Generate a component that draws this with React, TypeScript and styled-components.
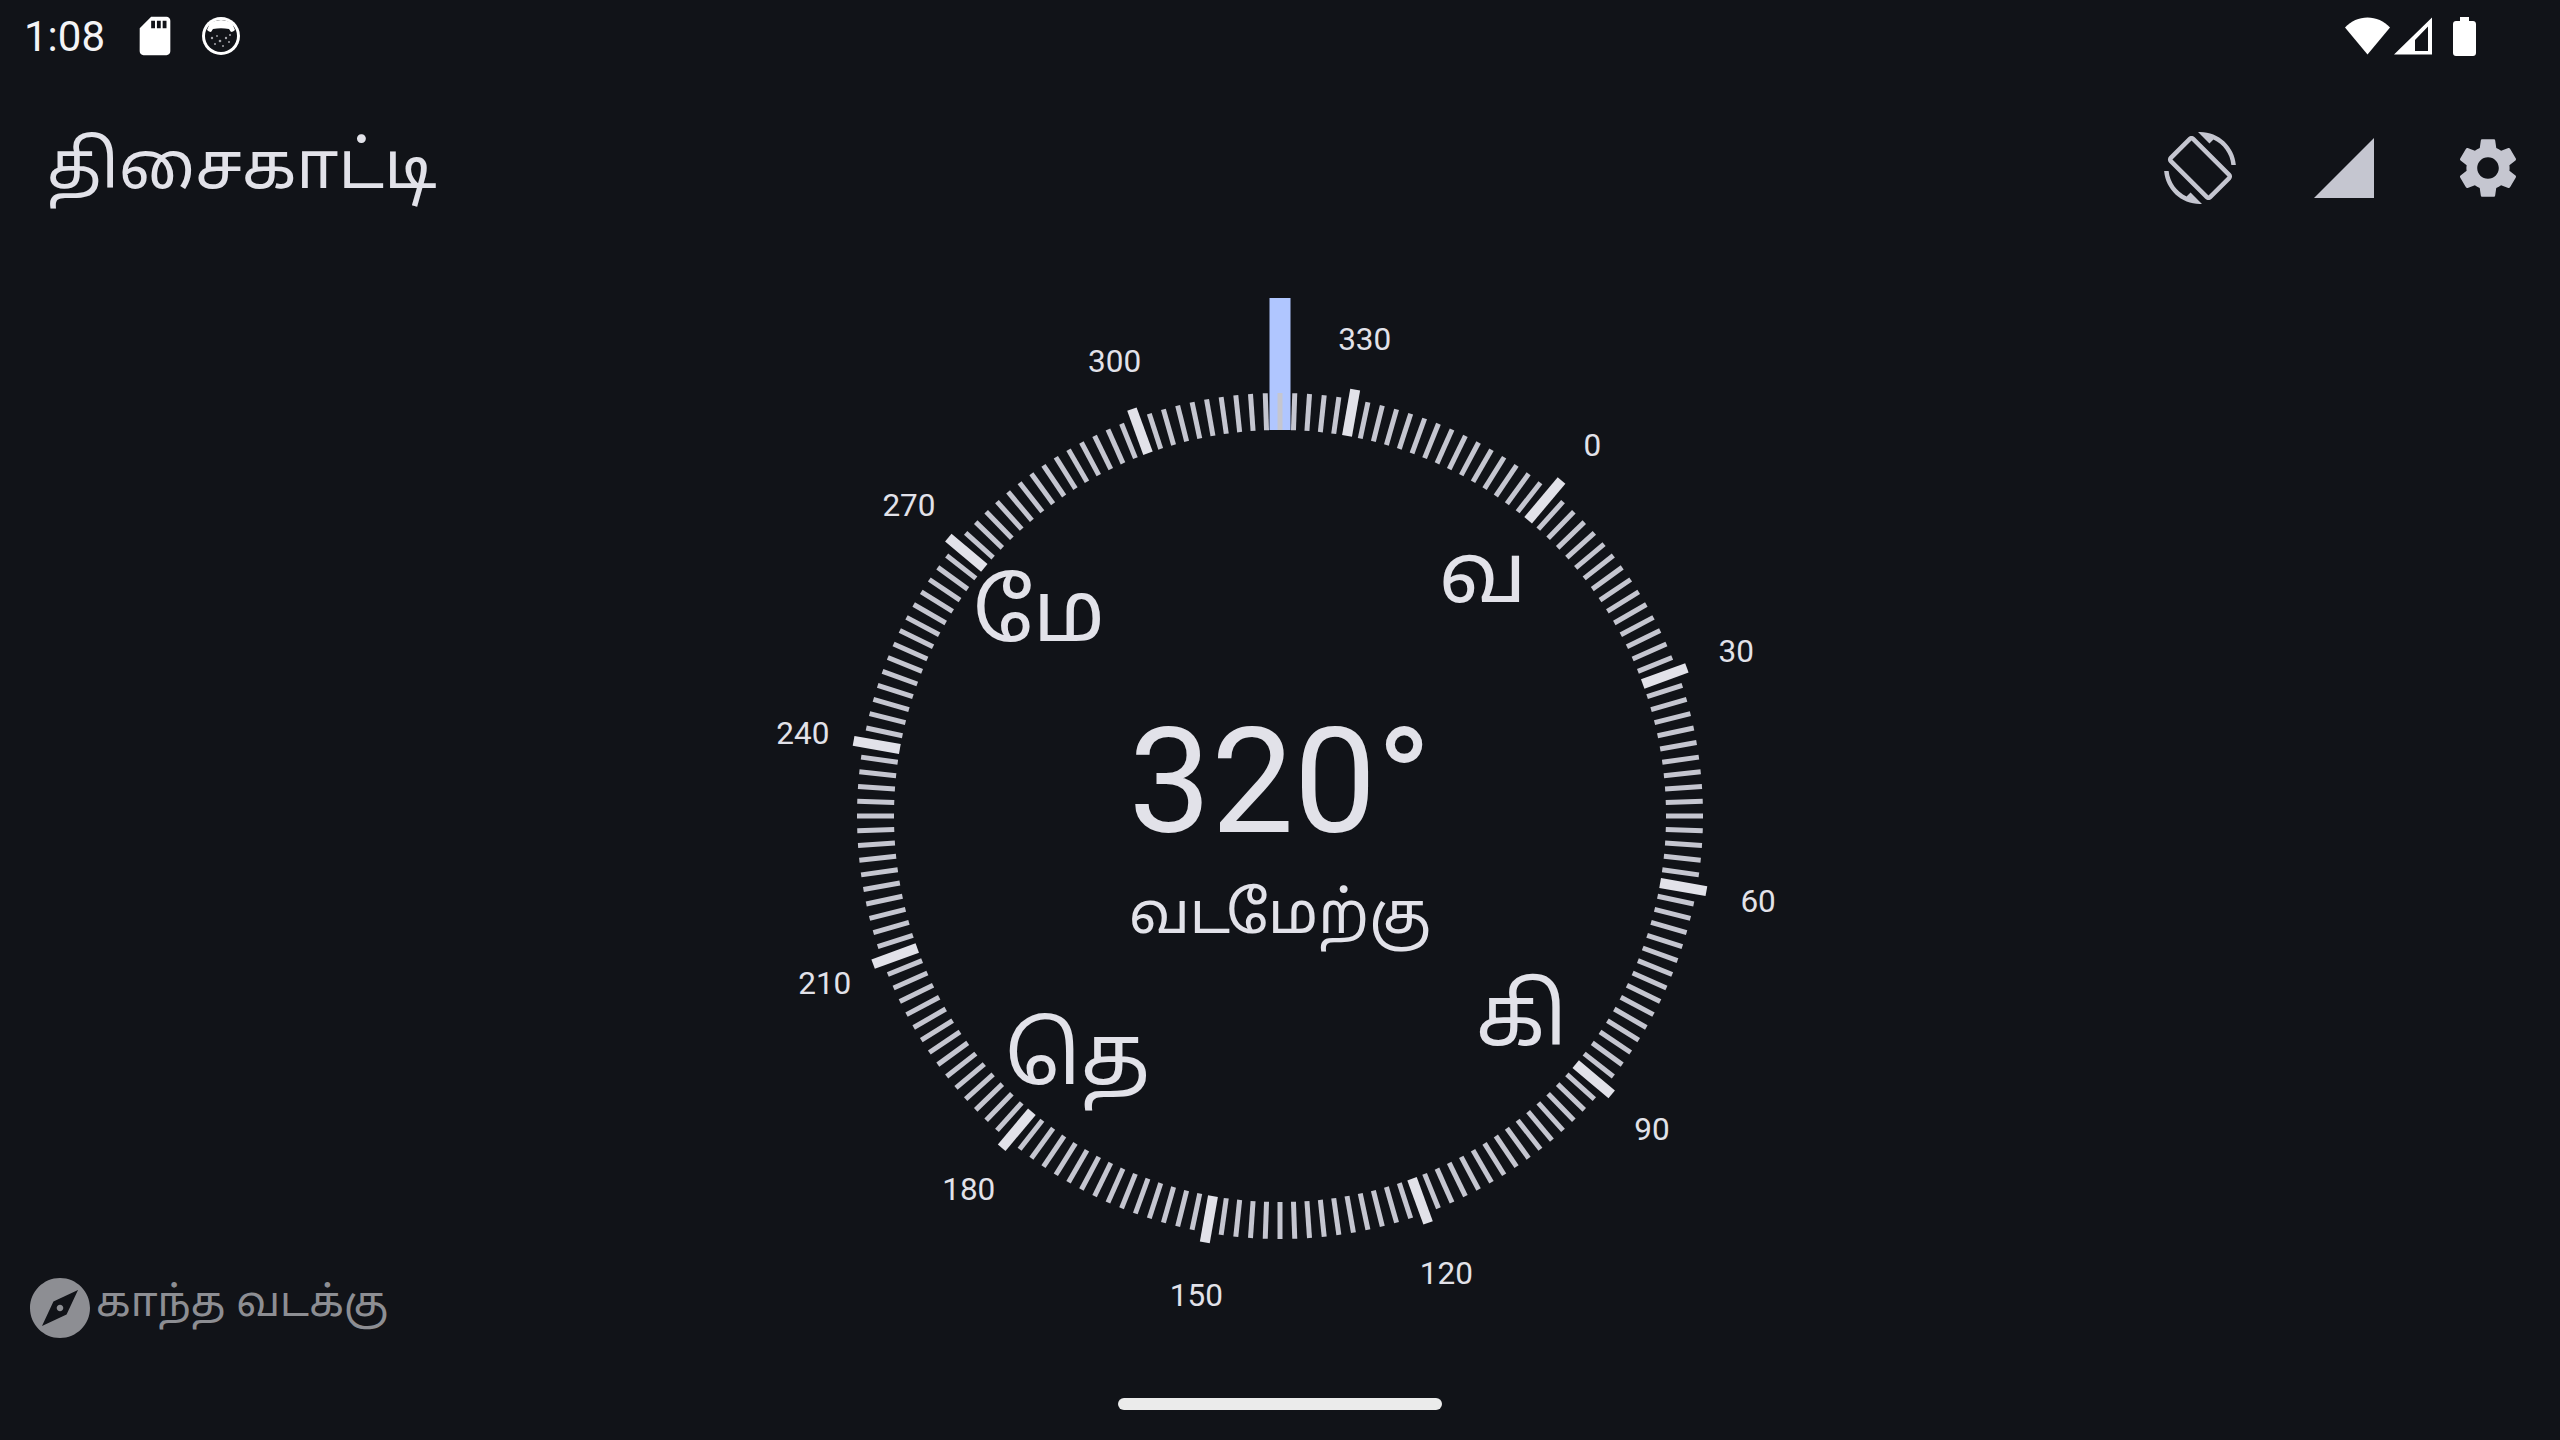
import React from 'react';
import styled, {createGlobalStyle} from 'styled-components';

const HEADING = 320;
const TAMIL_FONT = '"Noto Sans Tamil", "Noto Sans", sans-serif';

const GlobalStyle = createGlobalStyle`
  html, body {
    margin: 0;
    padding: 0;
    background: #111318;
  }
  #root {
    height: 1440px;
  }
`;

const Page = styled.div`
  display: flex;
  flex-direction: column;
  width: 2560px;
  height: 1440px;
  overflow: hidden;
  background: #111318;
  color: #e2e2e9;
  font-family: Roboto, sans-serif;
`;

const StatusBar = styled.header`
  display: flex;
  align-items: center;
  justify-content: space-between;
  flex: none;
  height: 72px;
  padding: 0 84px 0 24px;
`;

const StatusGroup = styled.div`
  display: flex;
  align-items: center;
`;

const Time = styled.span`
  width: 108px;
  font-size: 42px;
  color: #f4f4f6;
`;

const StatusIcon = styled.svg<{$gap?: number}>`
  display: block;
  flex: none;
  margin-left: ${p => p.$gap ?? 0}px;
  fill: #ffffff;
`;

const Toolbar = styled.div`
  display: flex;
  align-items: center;
  justify-content: space-between;
  flex: none;
  height: 192px;
  padding: 0 36px 0 47px;
`;

const Title = styled.h1`
  margin: 6px 0 0;
  font-family: ${TAMIL_FONT};
  font-size: 66px;
  font-weight: 400;
  color: #e2e2e9;
`;

const Actions = styled.div`
  display: flex;
  gap: 72px;
`;

const ActionIcon = styled.svg`
  display: block;
  width: 72px;
  height: 72px;
  fill: #c5c6d0;
`;

const Main = styled.main`
  position: relative;
  display: flex;
  align-items: center;
  justify-content: center;
  flex: 1;
  min-height: 0;
`;

const Dial = styled.div`
  position: relative;
  width: 1200px;
  height: 1104px;
`;

const DialFace = styled.svg`
  display: block;
`;

const Tick = styled.line<{$major?: boolean}>`
  stroke: ${p => (p.$major ? '#e2e2e9' : '#c5c6d0')};
  stroke-width: ${p => (p.$major ? 10 : 5)};
`;

const Pointer = styled.rect`
  fill: #b0c6ff;
`;

const DegreeLabel = styled.text`
  fill: #e2e2e9;
  font-size: 31.500px;
  text-anchor: middle;
  dominant-baseline: central;
`;

const CardinalLabel = styled.text`
  fill: #e2e2e9;
  font-family: ${TAMIL_FONT};
  font-size: 84px;
  text-anchor: middle;
  dominant-baseline: central;
`;

const Reading = styled.div`
  position: absolute;
  inset: 0;
  display: flex;
  flex-direction: column;
  align-items: center;
  justify-content: center;
`;

const Degrees = styled.div`
  margin-top: 28px;
  font-size: 147px;
  line-height: 176px;
  color: #e2e2e9;
`;

const Direction = styled.div`
  margin-top: 2px;
  font-family: ${TAMIL_FONT};
  font-size: 58.500px;
  line-height: 94px;
  color: #e2e2e9;
`;

const NorthHint = styled.div`
  position: absolute;
  left: 24px;
  bottom: 24px;
  display: flex;
  align-items: center;
  font-family: ${TAMIL_FONT};
  font-size: 42px;
  color: #8d8e93;
`;

const HintText = styled.span`
  margin-bottom: 6px;
`;

const HintIcon = styled.svg`
  display: block;
  width: 72px;
  height: 72px;
  fill: #8d8e93;
`;

const NavBar = styled.div`
  display: flex;
  align-items: center;
  justify-content: center;
  flex: none;
  height: 72px;
`;

const NavHandle = styled.div`
  width: 324px;
  height: 12px;
  border-radius: 6px;
  background: #ebebeb;
`;

const polar = (angle: number, radius: number) => {
    const rad = (angle * Math.PI) / 180;
    return {x: radius * Math.sin(rad), y: -radius * Math.cos(rad)};
};

const cardinals = [
    {text: 'வ', angle: 40},
    {text: 'கி', angle: 130},
    {text: 'தெ', angle: 220},
    {text: 'மே', angle: 310},
];

const degreesList = Array.from({length: 180}, (_, i) => i * 2);

// the north mark sticks out a little further than the other 30 degree marks
const tickEnd = (deg: number) => {
    if (deg === 0) return -438;
    return deg % 30 === 0 ? -433 : -423;
};

function CatFace() {
    return (
        <StatusIcon $gap={24} width="38" height="38" viewBox="0 0 38 38">
            <circle cx="19" cy="19" r="19" />
            <circle cx="19" cy="19" r="16" fill="#111318" />
            <path d="M8 6Q19 0 30 6L33 13Q31 15 29 15L27 12Q19 10.500 11 12L9 15Q7 15 5 13Z" />
            <g fill="#a4a5aa">
                <circle cx="10" cy="21" r="1.200" />
                <circle cx="15" cy="19" r="0.900" />
                <circle cx="18" cy="24" r="1.300" />
                <circle cx="24" cy="21" r="1.200" />
                <circle cx="28" cy="18" r="1" />
                <circle cx="13" cy="27" r="1" />
                <circle cx="21" cy="29" r="1" />
                <circle cx="27" cy="25" r="1" />
            </g>
        </StatusIcon>
    );
}

export default function App() {
    return (
        <Page>
            <GlobalStyle />
            <StatusBar>
                <StatusGroup>
                    <Time>1:08</Time>
                    <StatusIcon width="46" height="46" viewBox="0 0 24 24">
                        <path d="M18 2h-8L4.020 8 4 20c0 1.100.9 2 2 2h12c1.100 0 2-.9 2-2V4c0-1.100-.9-2-2-2zm-6 6h-2V4h2v4zm3 0h-2V4h2v4zm3 0h-2V4h2v4z" />
                    </StatusIcon>
                    <CatFace />
                </StatusGroup>
                <StatusGroup>
                    <StatusIcon width="45" height="38" viewBox="0 0 45 38">
                        <path d="M22.500 37.500 0 10.600C6 4 14 .5 22.500.5S39 4 45 10.600z" />
                    </StatusIcon>
                    <StatusIcon $gap={4} width="38" height="38" viewBox="0 0 38 38">
                        <path
                            fillRule="evenodd"
                            d="M0 37.500h38V.5zM21 23l13-13.500v24.500H21z"
                        />
                    </StatusIcon>
                    <StatusIcon $gap={21} width="23" height="39" viewBox="0 0 23 39">
                        <path d="M7 0h9v4h4c1.700 0 3 1.300 3 3v29c0 1.700-1.300 3-3 3H3c-1.700 0-3-1.300-3-3V7c0-1.700 1.300-3 3-3h4z" />
                    </StatusIcon>
                </StatusGroup>
            </StatusBar>

            <Toolbar>
                <Title>திசைகாட்டி</Title>
                <Actions>
                    <ActionIcon viewBox="0 0 24 24">
                        <path d="M16.480 2.520c3.270 1.550 5.610 4.720 5.970 8.480h1.500C23.440 4.840 18.290 0 12 0l-.66.03 3.810 3.810 1.330-1.320zm-6.250-.77c-.59-.59-1.540-.59-2.120 0L1.750 8.110c-.59.59-.59 1.540 0 2.120l12.020 12.020c.59.59 1.540.59 2.120 0l6.360-6.360c.59-.59.59-1.540 0-2.120L10.230 1.750zm4.600 19.440L2.810 9.170l6.360-6.360 12.020 12.020-6.360 6.360zm-7.310.29C4.250 19.940 1.910 16.760 1.550 13H.05C.56 19.160 5.710 24 12 24l.66-.03-3.810-3.810-1.330 1.320z" />
                    </ActionIcon>
                    <ActionIcon viewBox="0 0 24 24">
                        <path d="M2 22h20V2z" />
                    </ActionIcon>
                    <ActionIcon viewBox="0 0 24 24">
                        <path d="M19.140 12.940c.04-.3.06-.61.06-.94 0-.32-.02-.64-.07-.94l2.030-1.580c.18-.14.23-.41.12-.61l-1.920-3.320c-.12-.22-.37-.29-.59-.22l-2.390.96c-.5-.38-1.030-.7-1.620-.94l-.36-2.540c-.04-.24-.24-.41-.48-.41h-3.840c-.24 0-.43.17-.47.41l-.36 2.540c-.59.24-1.130.57-1.620.94l-2.390-.96c-.22-.08-.47 0-.59.22L2.740 8.870c-.12.21-.08.47.12.61l2.030 1.580c-.05.3-.09.63-.09.94s.02.64.07.94l-2.030 1.580c-.18.14-.23.41-.12.61l1.920 3.320c.12.22.37.29.59.22l2.390-.96c.5.38 1.030.7 1.620.94l.36 2.54c.05.24.24.41.48.41h3.840c.24 0 .44-.17.47-.41l.36-2.540c.59-.24 1.130-.56 1.620-.94l2.390.96c.22.08.47 0 .59-.22l1.920-3.320c.12-.22.07-.47-.12-.61l-2.010-1.580zM12 15.600c-1.980 0-3.600-1.620-3.600-3.600s1.620-3.600 3.600-3.600 3.600 1.620 3.600 3.600-1.620 3.600-3.600 3.600z" />
                    </ActionIcon>
                </Actions>
            </Toolbar>

            <Main>
                <Dial>
                    <DialFace width="1200" height="1104" viewBox="-600 -552 1200 1104">
                        <Pointer x="-10.500" y="-518" width="21" height="132" />
                        {degreesList.map(deg => (
                            <Tick
                                key={deg}
                                $major={deg % 30 === 0}
                                x1="0"
                                x2="0"
                                y1="-386"
                                y2={tickEnd(deg)}
                                transform={`rotate(${deg - HEADING})`}
                            />
                        ))}
                        {degreesList.filter(deg => deg % 30 === 0).map(deg => {
                            const pos = polar(deg - HEADING, 485);
                            return (
                                <DegreeLabel key={deg} x={pos.x + 0.5} y={pos.y + 1.5}>
                                    {deg}
                                </DegreeLabel>
                            );
                        })}
                        {cardinals.map(item => {
                            const pos = polar(item.angle, 315);
                            return (
                                <CardinalLabel key={item.text} x={pos.x} y={pos.y + 6}>
                                    {item.text}
                                </CardinalLabel>
                            );
                        })}
                    </DialFace>
                    <Reading>
                        <Degrees>{HEADING}°</Degrees>
                        <Direction>வடமேற்கு</Direction>
                    </Reading>
                </Dial>
                <NorthHint>
                    <HintIcon viewBox="0 0 24 24">
                        <path d="M12 10.900c-.61 0-1.100.49-1.100 1.100s.49 1.100 1.100 1.100c.61 0 1.100-.49 1.100-1.100s-.49-1.100-1.100-1.100zM12 2C6.480 2 2 6.480 2 12s4.480 10 10 10 10-4.480 10-10S17.520 2 12 2zm2.190 12.190L6 18l3.810-8.190L18 6l-3.810 8.190z" />
                    </HintIcon>
                    <HintText>காந்த வடக்கு</HintText>
                </NorthHint>
            </Main>

            <NavBar>
                <NavHandle />
            </NavBar>
        </Page>
    );
}
